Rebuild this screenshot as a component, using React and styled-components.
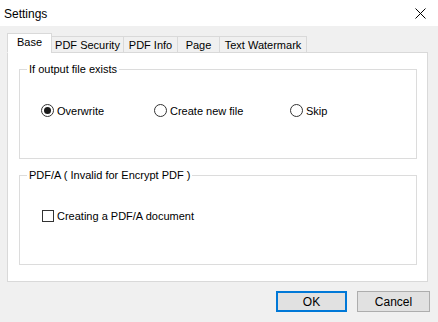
import React, { useState } from 'react';
import styled, { createGlobalStyle } from 'styled-components';

const GlobalStyle = createGlobalStyle`
  html, body {
    margin: 0;
    padding: 0;
    background: #f0f0f0;
  }
  body {
    font-family: "Liberation Sans", Arial, sans-serif;
    font-size: 11px;
    color: #000;
  }
`

const Window = styled.div`
  width: 438px;
  height: 322px;
  display: flex;
  flex-direction: column;
  background: #f0f0f0;
  overflow: hidden;
`

const TitleBar = styled.div`
  height: 26px;
  flex: none;
  background: #fff;
  display: flex;
  align-items: center;
  justify-content: space-between;
  padding: 1px 10px 0 4px;
  box-sizing: border-box;
  font-size: 12px;
`

const CloseButton = styled.button`
  border: 0;
  background: none;
  padding: 0;
  width: 16px;
  height: 16px;
  display: flex;
  align-items: center;
  justify-content: center;
`

const Body = styled.div`
  padding: 7px 10px 0 7px;
  display: flex;
  flex-direction: column;
`

const TabRow = styled.div`
  display: flex;
  align-items: flex-end;
  height: 20px;
  position: relative;
  z-index: 1;
`

const Tab = styled.div`
  width: ${p => p.$w}px;
  height: ${p => (p.$active ? 20 : 17)}px;
  box-sizing: border-box;
  border: 1px solid #d9d9d9;
  border-bottom: ${p => (p.$active ? '1px solid #fff' : '1px solid #d9d9d9')};
  margin-left: -1px;
  background: ${p => (p.$active ? '#fff' : '#f0f0f0')};
  display: flex;
  align-items: center;
  justify-content: center;
  padding-bottom: ${p => (p.$active ? 2 : 0)}px;
  font-size: 11px;
  white-space: nowrap;
  &:first-child {
    margin-left: 0;
  }
`

const Panel = styled.div`
  height: 230px;
  box-sizing: border-box;
  margin-top: -1px;
  background: #fff;
  border: 1px solid #d9d9d9;
  padding: 9px 10px 0 11px;
  display: flex;
  flex-direction: column;
`

const Group = styled.fieldset`
  margin: 0;
  height: 97px;
  box-sizing: border-box;
  border: 1px solid #dcdcdc;
  padding: 0;
  min-inline-size: 0;
  & + & {
    margin-top: 9px;
  }
`

const Legend = styled.legend`
  margin-left: 7px;
  padding: 0 2px;
  font-size: 11px;
  line-height: 14px;
`

const OptionRow = styled.div`
  display: flex;
  align-items: center;
  padding: ${p => p.$top}px 0 0 ${p => p.$left}px;
`

const Option = styled.label`
  width: ${p => p.$w}px;
  display: flex;
  align-items: center;
  gap: 3px;
  font-size: 11px;
  flex: none;
`

const RadioMark = styled.span`
  width: 13px;
  height: 13px;
  box-sizing: border-box;
  border-radius: 50%;
  border: 1px solid #333;
  display: flex;
  align-items: center;
  justify-content: center;
  background: #fff;
  &::after {
    content: '';
    width: 7px;
    height: 7px;
    border-radius: 50%;
    background: ${p => (p.$checked ? '#1a1a1a' : 'transparent')};
  }
`

const CheckMark = styled.span`
  width: 12px;
  height: 12px;
  box-sizing: border-box;
  border: 1px solid #333;
  background: #fff;
`

const ButtonRow = styled.div`
  display: flex;
  justify-content: flex-end;
  gap: 10px;
  padding: 9px 8px 0 0;
  margin-right: -10px;
`

const Button = styled.button`
  height: 21px;
  width: ${p => p.$w}px;
  box-sizing: border-box;
  background: #e1e1e1;
  border: ${p => (p.$primary ? '2px solid #0078d7' : '1px solid #adadad')};
  font-family: inherit;
  font-size: 12px;
  color: #000;
  padding: 0;
`

const tabs = [
  { label: 'Base', w: 45 },
  { label: 'PDF Security', w: 73 },
  { label: 'PDF Info', w: 55 },
  { label: 'Page', w: 43 },
  { label: 'Text Watermark', w: 88 },
]

export default function App() {
  const [mode, setMode] = useState('overwrite')
  const options = [
    { id: 'overwrite', label: 'Overwrite', w: 113 },
    { id: 'new', label: 'Create new file', w: 136 },
    { id: 'skip', label: 'Skip', w: 60 },
  ]
  return (
    <>
      <GlobalStyle />
      <Window>
        <TitleBar>
          <span>Settings</span>
          <CloseButton aria-label="Close">
            <svg width="11" height="11" viewBox="0 0 11 11">
              <path d="M0.5 0.5 L10.5 10.5 M10.5 0.5 L0.5 10.5" stroke="#000" strokeWidth="1" />
            </svg>
          </CloseButton>
        </TitleBar>
        <Body>
          <TabRow>
            {tabs.map((t, i) => (
              <Tab key={t.label} $w={t.w} $active={i === 0}>{t.label}</Tab>
            ))}
          </TabRow>
          <Panel>
            <Group>
              <Legend>If output file exists</Legend>
              <OptionRow $top={28} $left={21}>
                {options.map(o => (
                  <Option key={o.id} $w={o.w} onClick={() => setMode(o.id)}>
                    <RadioMark $checked={mode === o.id} />
                    {o.label}
                  </Option>
                ))}
              </OptionRow>
            </Group>
            <Group>
              <Legend>PDF/A ( Invalid for Encrypt PDF )</Legend>
              <OptionRow $top={28} $left={22}>
                <Option $w={200}>
                  <CheckMark />
                  Creating a PDF/A document
                </Option>
              </OptionRow>
            </Group>
          </Panel>
          <ButtonRow>
            <Button $primary $w={71}>OK</Button>
            <Button $w={73}>Cancel</Button>
          </ButtonRow>
        </Body>
      </Window>
    </>
  )
}
